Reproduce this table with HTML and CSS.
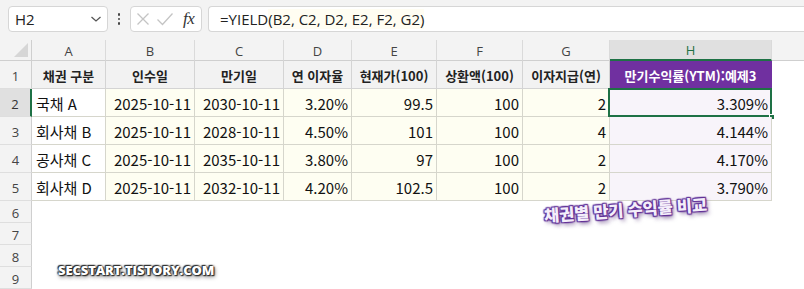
FILE: index.html
```html
<!DOCTYPE html>
<html lang="ko">
<head>
<meta charset="utf-8">
<link rel="stylesheet" href="styles.css">
</head>
<body>
<div class="app">
  <div class="topbar">
    <div class="namebox">
      <span class="nb-text">H2</span>
      <svg class="chev" width="12" height="8" viewBox="0 0 12 8"><path d="M1.5 2 L6 6 L10.5 2" fill="none" stroke="#555" stroke-width="1.3"/></svg>
    </div>
    <div class="vdots"><i></i><i></i><i></i></div>
    <div class="fxbox">
      <svg width="14" height="14" viewBox="0 0 14 14"><path d="M1.5 1.5 L12.5 12.5 M12.5 1.5 L1.5 12.5" stroke="#c4c4c4" stroke-width="1.3"/></svg>
      <svg width="18" height="14" viewBox="0 0 18 14"><path d="M1.5 7.5 L6.5 12.5 L16.5 1.5" fill="none" stroke="#c4c4c4" stroke-width="1.3"/></svg>
      <span class="fx">fx</span>
    </div>
    <div class="formula"><span>=YIELD</span><span class="args">(B2, C2, D2, E2, F2, G2)</span></div>
  </div>
  <div class="sheet">
    <div class="row colhead">
      <div class="rh corner"><svg width="14" height="14" viewBox="0 0 14 14"><path d="M14 0 L14 14 L0 14 Z" fill="#d6d6d6"/></svg></div>
      <div class="ch cA">A</div><div class="ch cB">B</div><div class="ch cC">C</div><div class="ch cD">D</div><div class="ch cE">E</div><div class="ch cF">F</div><div class="ch cG">G</div><div class="ch cH sel">H</div><div class="ch rest"></div>
    </div>
    <div class="row r-data">
      <div class="rh">1</div>
      <div class="c cA hd">채권 구분</div><div class="c cB hd">인수일</div><div class="c cC hd">만기일</div><div class="c cD hd">연 이자율</div><div class="c cE hd">현재가(100)</div><div class="c cF hd">상환액(100)</div><div class="c cG hd">이자지급(연)</div><div class="c cH hp">만기수익률(YTM):예제3</div><div class="c rest"></div>
    </div>
    <div class="row r-data">
      <div class="rh rsel">2</div>
      <div class="c cA tl">국채 A</div><div class="c cB y">2025-10-11</div><div class="c cC y">2030-10-11</div><div class="c cD y">3.20%</div><div class="c cE y">99.5</div><div class="c cF y">100</div><div class="c cG y">2</div><div class="c cH p active">3.309%<span class="selbox"></span><span class="handle"></span></div><div class="c rest"></div>
    </div>
    <div class="row r-data">
      <div class="rh">3</div>
      <div class="c cA tl">회사채 B</div><div class="c cB y">2025-10-11</div><div class="c cC y">2028-10-11</div><div class="c cD y">4.50%</div><div class="c cE y">101</div><div class="c cF y">100</div><div class="c cG y">4</div><div class="c cH p">4.144%</div><div class="c rest"></div>
    </div>
    <div class="row r-data">
      <div class="rh">4</div>
      <div class="c cA tl">공사채 C</div><div class="c cB y">2025-10-11</div><div class="c cC y">2035-10-11</div><div class="c cD y">3.80%</div><div class="c cE y">97</div><div class="c cF y">100</div><div class="c cG y">2</div><div class="c cH p">4.170%</div><div class="c rest"></div>
    </div>
    <div class="row r-data">
      <div class="rh">5</div>
      <div class="c cA tl">회사채 D</div><div class="c cB y">2025-10-11</div><div class="c cC y">2032-10-11</div><div class="c cD y">4.20%</div><div class="c cE y">102.5</div><div class="c cF y">100</div><div class="c cG y">2</div><div class="c cH p">3.790%</div><div class="c rest"></div>
    </div>
    <div class="row r-empty"><div class="rh">6</div><div class="blank"></div></div>
    <div class="row r-empty"><div class="rh">7</div><div class="blank"></div></div>
    <div class="row r-empty"><div class="rh">8</div><div class="blank"></div></div>
    <div class="row r-empty"><div class="rh">9</div><div class="blank"></div></div>
    <div class="caption">채권별 만기 수익률 비교</div>
    <div class="watermark">SECSTART.TISTORY.COM</div>
  </div>
</div>
</body>
</html>
```

FILE: styles.css
```css
* { box-sizing: border-box; margin: 0; padding: 0; }
html, body { width: 804px; height: 289px; overflow: hidden; background: #fff; }
body { font-family: "Noto Sans CJK KR", "Noto Sans", sans-serif; color: #111; }

.app { width: 804px; height: 289px; display: flex; flex-direction: column; }

.topbar {
  height: 40px; background: #f3f3f3; display: flex; align-items: flex-start;
  padding: 6px 0 0 8px; gap: 0;
}
.namebox {
  width: 100px; height: 26px; background: #fff; border: 1px solid #d6d6d6; border-radius: 4px;
  display: flex; align-items: center; justify-content: space-between; padding: 0 5px 0 6px;
}
.nb-text { font-family: "Open Sans", "Noto Sans", sans-serif; font-size: 15px; color: #222; }
.vdots { width: 22px; height: 26px; display: flex; flex-direction: column; align-items: center; justify-content: center; gap: 2px; }
.vdots i { display: block; width: 2.5px; height: 2.5px; background: #444; border-radius: 50%; }
.fxbox {
  width: 72px; height: 26px; background: #fff; border: 1px solid #d6d6d6; border-radius: 4px;
  display: flex; align-items: center; gap: 6px; padding: 0 0 0 5px;
}
.fx { font-family: "Liberation Serif", "DejaVu Serif", serif; font-style: italic; font-size: 17px; color: #333; margin-left: 3px; letter-spacing: -0.5px; }
.formula {
  margin-left: 6px; flex: 1; height: 26px; background: #fff; border: 1px solid #d6d6d6; border-right: none; border-radius: 4px 0 0 4px;
  display: flex; align-items: center; padding-left: 11px;
  font-family: "Open Sans", "Noto Sans", sans-serif; font-size: 15px; color: #222;
}
.args { background: #fffdf2; }

.sheet { position: relative; flex: 1; display: flex; flex-direction: column; }
.row { display: flex; }
.colhead { height: 21px; }
.r-data { height: 28px; }
.r-empty { height: 22px; }

.rh {
  width: 32px; flex: none; background: #f3f3f3; border-right: 1px solid #cfcfcf; border-bottom: 1px solid #dedede;
  display: flex; align-items: center; justify-content: center;
  font-family: "Open Sans", "Noto Sans", sans-serif; font-size: 13px; color: #444; padding-top: 3px;
}
.corner { align-items: flex-end; justify-content: flex-end; padding: 0 3px 3px 0; border-bottom-color: #cfcfcf; }
.rsel { background: #e0e0e0; border-right: 2px solid #1e7145; color: #333; }

.ch {
  background: #f3f3f3; border-right: 1px solid #dadada; border-bottom: 1px solid #cfcfcf;
  display: flex; align-items: center; justify-content: center;
  font-family: "Open Sans", "Noto Sans", sans-serif; font-size: 13px; color: #444; padding-top: 1px;
}
.ch.sel { background: #e0e0e0; border-bottom: 2px solid #1e7145; color: #1e7145; }
.ch.rest { border-right: none; }

.cA { width: 74px; } .cB { width: 89px; } .cC { width: 89px; } .cD { width: 68px; }
.cE { width: 85px; } .cF { width: 86px; } .cG { width: 87px; } .cH { width: 162px; }
.rest { flex: 1; }

.c {
  border-right: 1px solid #d6d6cc; border-bottom: 1px solid #d6d6cc;
  display: flex; align-items: center; justify-content: flex-end; padding: 1px 3px 0 3px;
  font-size: 15px; white-space: nowrap; position: relative;
}
.c.rest { border: none; }
.hd { background: #f2f2f2; justify-content: center; font-weight: 700; font-size: 13px; color: #222; border-color: #d4d4d4; }
.hp { background: #7030a0; color: #fff; justify-content: center; font-weight: 700; font-size: 13px; border-color: #7030a0; }
.tl { justify-content: flex-start; background: #fff; padding-left: 4px; }
.y { background: #fefef2; }
.p { background: #f8f4fa; }

.selbox { position: absolute; left: -2px; top: -1px; right: -1px; bottom: -1px; border: 2px solid #1e7145; pointer-events: none; }
.handle { position: absolute; right: -4px; bottom: -4px; width: 6px; height: 6px; background: #1e7145; border: 1px solid #fff; }

.blank { flex: 1; }

.caption {
  position: absolute; left: 544px; top: 163px; transform: rotate(-4deg); transform-origin: left center;
  font-weight: 900; font-size: 16.5px; color: #f4eefa; letter-spacing: -0.2px;
  text-shadow: 0 0 2px #6a3aa0, 0 0 2px #6a3aa0, 1px 1px 1px #5a2a90, -1px -1px 1px #5a2a90, 1px -1px 1px #5a2a90, -1px 1px 1px #5a2a90, 2px 3px 4px rgba(60,20,100,0.6);
}
.watermark {
  position: absolute; left: 58px; top: 221px;
  font-family: "Open Sans", "Noto Sans", sans-serif; font-weight: 800; font-size: 13px; color: #fff; letter-spacing: -0.1px;
  text-shadow: 0 0 2px #333, 0 0 2px #333, 1px 1px 1px #222, -1px -1px 1px #222, 1px 2px 4px rgba(0,0,0,0.6);
}
```
